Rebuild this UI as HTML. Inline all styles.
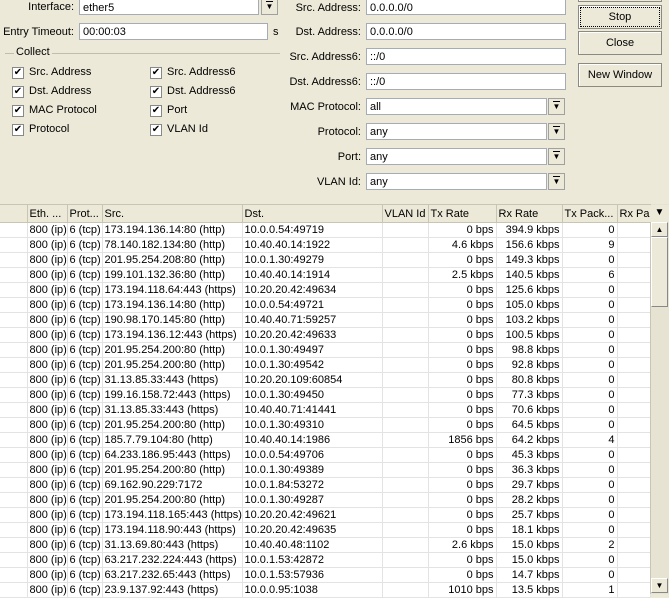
<!DOCTYPE html>
<html><head><style>
*{margin:0;padding:0;box-sizing:border-box}
body{width:669px;height:594px;overflow:hidden;background:#ece9d8;font-family:"Liberation Sans",Tahoma,sans-serif;font-size:11px;color:#000;position:relative}
.a{position:absolute}
.lbl{position:absolute;text-align:right;white-space:nowrap;line-height:17px}
.in{position:absolute;background:#fff;border:1px solid #a5acb5;height:17px;line-height:16px;padding-left:3px;white-space:nowrap}
.dd{position:absolute;width:17px;height:17px;border:1px solid #a0a0a0;background:#ece9d8;font-size:8px;text-align:center;line-height:9px;padding-top:2px}
.dd b{display:block;width:7px;margin:0 auto;border-top:1px solid #000;height:0}
.cb{position:absolute;width:12px;height:12px;background:#fff;border:1px solid #888;font-size:10px;line-height:10px;text-align:center}
.ct{position:absolute;line-height:13px;white-space:nowrap}
.btn{position:absolute;left:578px;width:84px;height:24px;border:1px solid #8a8a80;background:#ece9d8;text-align:center;line-height:22px;box-shadow:inset 1px 1px #fff}
table{position:absolute;left:0;top:204px;border-collapse:collapse;table-layout:fixed;width:650px;background:#fff}
td,th{height:15px;border-right:1px solid #e3e3e3;border-bottom:1px solid #e3e3e3;white-space:nowrap;overflow:hidden;font-weight:normal;padding:0 2px;line-height:14px}
th{height:18px;background:#ece9d8;text-align:left;border-right:1px solid #c8c5b5;border-bottom:1px solid #c8c5b5;border-top:1px solid #c8c5b5}
td.r{text-align:right}
</style></head><body>
<div class="lbl" style="left:0;width:74px;top:-1px">Interface:</div>
<div class="in" style="left:79px;top:-2px;width:180px;line-height:18px">ether5</div>
<div class="dd" style="left:261px;top:-2px"><b></b>&#9660;</div>
<div class="lbl" style="left:0;width:74px;top:24px">Entry Timeout:</div>
<div class="in" style="left:79px;top:23px;width:189px">00:00:03</div>
<div class="a" style="left:273px;top:26px">s</div>
<div class="a" style="left:5px;top:53px;width:275px;border-top:1px solid #c0bdae"></div>
<div class="a" style="left:14px;top:46px;background:#ece9d8;padding:0 2px">Collect</div>
<div class="cb" style="left:12px;top:67px">&#10004;</div><div class="ct" style="left:29px;top:66px">Src. Address</div>
<div class="cb" style="left:12px;top:86px">&#10004;</div><div class="ct" style="left:29px;top:85px">Dst. Address</div>
<div class="cb" style="left:12px;top:105px">&#10004;</div><div class="ct" style="left:29px;top:104px">MAC Protocol</div>
<div class="cb" style="left:12px;top:124px">&#10004;</div><div class="ct" style="left:29px;top:123px">Protocol</div>
<div class="cb" style="left:150px;top:67px">&#10004;</div><div class="ct" style="left:167px;top:66px">Src. Address6</div>
<div class="cb" style="left:150px;top:86px">&#10004;</div><div class="ct" style="left:167px;top:85px">Dst. Address6</div>
<div class="cb" style="left:150px;top:105px">&#10004;</div><div class="ct" style="left:167px;top:104px">Port</div>
<div class="cb" style="left:150px;top:124px">&#10004;</div><div class="ct" style="left:167px;top:123px">VLAN Id</div>

<div class="lbl" style="left:280px;width:81px;top:0px">Src. Address:</div><div class="in" style="left:366px;top:-2px;width:200px;line-height:18px">0.0.0.0/0</div>
<div class="lbl" style="left:280px;width:81px;top:24px">Dst. Address:</div><div class="in" style="left:366px;top:23px;width:200px">0.0.0.0/0</div>
<div class="lbl" style="left:280px;width:81px;top:49px">Src. Address6:</div><div class="in" style="left:366px;top:48px;width:200px">::/0</div>
<div class="lbl" style="left:280px;width:81px;top:74px">Dst. Address6:</div><div class="in" style="left:366px;top:73px;width:200px">::/0</div>
<div class="lbl" style="left:280px;width:81px;top:99px">MAC Protocol:</div><div class="in" style="left:366px;top:98px;width:181px">all</div><div class="dd" style="left:548px;top:98px"><b></b>&#9660;</div>
<div class="lbl" style="left:280px;width:81px;top:124px">Protocol:</div><div class="in" style="left:366px;top:123px;width:181px">any</div><div class="dd" style="left:548px;top:123px"><b></b>&#9660;</div>
<div class="lbl" style="left:280px;width:81px;top:149px">Port:</div><div class="in" style="left:366px;top:148px;width:181px">any</div><div class="dd" style="left:548px;top:148px"><b></b>&#9660;</div>
<div class="lbl" style="left:280px;width:81px;top:174px">VLAN Id:</div><div class="in" style="left:366px;top:173px;width:181px">any</div><div class="dd" style="left:548px;top:173px"><b></b>&#9660;</div>

<div class="btn" style="top:-22px"></div>
<div class="btn" style="top:5px;outline:1px dotted #000;outline-offset:-3px">Stop</div>
<div class="btn" style="top:31px">Close</div>
<div class="btn" style="top:63px">New Window</div>

<table>
<colgroup><col style="width:27px"><col style="width:40px"><col style="width:35px"><col style="width:140px"><col style="width:140px"><col style="width:46px"><col style="width:68px"><col style="width:66px"><col style="width:55px"><col style="width:33px"></colgroup>
<tr><th></th><th>Eth. ...</th><th>Prot...</th><th>Src.</th><th>Dst.</th><th>VLAN Id</th><th>Tx Rate</th><th>Rx Rate</th><th>Tx Pack...</th><th>Rx Pa</th></tr>
<tr><td></td><td>800 (ip)</td><td>6 (tcp)</td><td>173.194.136.14:80 (http)</td><td>10.0.0.54:49719</td><td></td><td class="r">0 bps</td><td class="r">394.9 kbps</td><td class="r">0</td><td></td></tr>
<tr><td></td><td>800 (ip)</td><td>6 (tcp)</td><td>78.140.182.134:80 (http)</td><td>10.40.40.14:1922</td><td></td><td class="r">4.6 kbps</td><td class="r">156.6 kbps</td><td class="r">9</td><td></td></tr>
<tr><td></td><td>800 (ip)</td><td>6 (tcp)</td><td>201.95.254.208:80 (http)</td><td>10.0.1.30:49279</td><td></td><td class="r">0 bps</td><td class="r">149.3 kbps</td><td class="r">0</td><td></td></tr>
<tr><td></td><td>800 (ip)</td><td>6 (tcp)</td><td>199.101.132.36:80 (http)</td><td>10.40.40.14:1914</td><td></td><td class="r">2.5 kbps</td><td class="r">140.5 kbps</td><td class="r">6</td><td></td></tr>
<tr><td></td><td>800 (ip)</td><td>6 (tcp)</td><td>173.194.118.64:443 (https)</td><td>10.20.20.42:49634</td><td></td><td class="r">0 bps</td><td class="r">125.6 kbps</td><td class="r">0</td><td></td></tr>
<tr><td></td><td>800 (ip)</td><td>6 (tcp)</td><td>173.194.136.14:80 (http)</td><td>10.0.0.54:49721</td><td></td><td class="r">0 bps</td><td class="r">105.0 kbps</td><td class="r">0</td><td></td></tr>
<tr><td></td><td>800 (ip)</td><td>6 (tcp)</td><td>190.98.170.145:80 (http)</td><td>10.40.40.71:59257</td><td></td><td class="r">0 bps</td><td class="r">103.2 kbps</td><td class="r">0</td><td></td></tr>
<tr><td></td><td>800 (ip)</td><td>6 (tcp)</td><td>173.194.136.12:443 (https)</td><td>10.20.20.42:49633</td><td></td><td class="r">0 bps</td><td class="r">100.5 kbps</td><td class="r">0</td><td></td></tr>
<tr><td></td><td>800 (ip)</td><td>6 (tcp)</td><td>201.95.254.200:80 (http)</td><td>10.0.1.30:49497</td><td></td><td class="r">0 bps</td><td class="r">98.8 kbps</td><td class="r">0</td><td></td></tr>
<tr><td></td><td>800 (ip)</td><td>6 (tcp)</td><td>201.95.254.200:80 (http)</td><td>10.0.1.30:49542</td><td></td><td class="r">0 bps</td><td class="r">92.8 kbps</td><td class="r">0</td><td></td></tr>
<tr><td></td><td>800 (ip)</td><td>6 (tcp)</td><td>31.13.85.33:443 (https)</td><td>10.20.20.109:60854</td><td></td><td class="r">0 bps</td><td class="r">80.8 kbps</td><td class="r">0</td><td></td></tr>
<tr><td></td><td>800 (ip)</td><td>6 (tcp)</td><td>199.16.158.72:443 (https)</td><td>10.0.1.30:49450</td><td></td><td class="r">0 bps</td><td class="r">77.3 kbps</td><td class="r">0</td><td></td></tr>
<tr><td></td><td>800 (ip)</td><td>6 (tcp)</td><td>31.13.85.33:443 (https)</td><td>10.40.40.71:41441</td><td></td><td class="r">0 bps</td><td class="r">70.6 kbps</td><td class="r">0</td><td></td></tr>
<tr><td></td><td>800 (ip)</td><td>6 (tcp)</td><td>201.95.254.200:80 (http)</td><td>10.0.1.30:49310</td><td></td><td class="r">0 bps</td><td class="r">64.5 kbps</td><td class="r">0</td><td></td></tr>
<tr><td></td><td>800 (ip)</td><td>6 (tcp)</td><td>185.7.79.104:80 (http)</td><td>10.40.40.14:1986</td><td></td><td class="r">1856 bps</td><td class="r">64.2 kbps</td><td class="r">4</td><td></td></tr>
<tr><td></td><td>800 (ip)</td><td>6 (tcp)</td><td>64.233.186.95:443 (https)</td><td>10.0.0.54:49706</td><td></td><td class="r">0 bps</td><td class="r">45.3 kbps</td><td class="r">0</td><td></td></tr>
<tr><td></td><td>800 (ip)</td><td>6 (tcp)</td><td>201.95.254.200:80 (http)</td><td>10.0.1.30:49389</td><td></td><td class="r">0 bps</td><td class="r">36.3 kbps</td><td class="r">0</td><td></td></tr>
<tr><td></td><td>800 (ip)</td><td>6 (tcp)</td><td>69.162.90.229:7172</td><td>10.0.1.84:53272</td><td></td><td class="r">0 bps</td><td class="r">29.7 kbps</td><td class="r">0</td><td></td></tr>
<tr><td></td><td>800 (ip)</td><td>6 (tcp)</td><td>201.95.254.200:80 (http)</td><td>10.0.1.30:49287</td><td></td><td class="r">0 bps</td><td class="r">28.2 kbps</td><td class="r">0</td><td></td></tr>
<tr><td></td><td>800 (ip)</td><td>6 (tcp)</td><td>173.194.118.165:443 (https)</td><td>10.20.20.42:49621</td><td></td><td class="r">0 bps</td><td class="r">25.7 kbps</td><td class="r">0</td><td></td></tr>
<tr><td></td><td>800 (ip)</td><td>6 (tcp)</td><td>173.194.118.90:443 (https)</td><td>10.20.20.42:49635</td><td></td><td class="r">0 bps</td><td class="r">18.1 kbps</td><td class="r">0</td><td></td></tr>
<tr><td></td><td>800 (ip)</td><td>6 (tcp)</td><td>31.13.69.80:443 (https)</td><td>10.40.40.48:1102</td><td></td><td class="r">2.6 kbps</td><td class="r">15.0 kbps</td><td class="r">2</td><td></td></tr>
<tr><td></td><td>800 (ip)</td><td>6 (tcp)</td><td>63.217.232.224:443 (https)</td><td>10.0.1.53:42872</td><td></td><td class="r">0 bps</td><td class="r">15.0 kbps</td><td class="r">0</td><td></td></tr>
<tr><td></td><td>800 (ip)</td><td>6 (tcp)</td><td>63.217.232.65:443 (https)</td><td>10.0.1.53:57936</td><td></td><td class="r">0 bps</td><td class="r">14.7 kbps</td><td class="r">0</td><td></td></tr>
<tr><td></td><td>800 (ip)</td><td>6 (tcp)</td><td>23.9.137.92:443 (https)</td><td>10.0.0.95:1038</td><td></td><td class="r">1010 bps</td><td class="r">13.5 kbps</td><td class="r">1</td><td></td></tr>
</table>
<div class="a" style="left:650px;top:204px;width:19px;height:390px;background:#e6e3d3;border-left:1px solid #c8c5b5"></div>
<div class="a" style="left:650px;top:205px;width:19px;height:17px;text-align:center;font-size:10px;line-height:16px;background:#ece9d8">&#9660;</div>
<div class="a" style="left:651px;top:222px;width:17px;height:15px;background:#ece9d8;border:1px solid #fff;border-right-color:#888;border-bottom-color:#888;text-align:center;font-size:8px;line-height:13px">&#9650;</div>
<div class="a" style="left:651px;top:237px;width:17px;height:70px;background:#ece9d8;border:1px solid #fff;border-right-color:#888;border-bottom-color:#888"></div>
<div class="a" style="left:651px;top:578px;width:17px;height:15px;background:#ece9d8;border:1px solid #fff;border-right-color:#888;border-bottom-color:#888;text-align:center;font-size:8px;line-height:13px">&#9660;</div>
</body></html>
